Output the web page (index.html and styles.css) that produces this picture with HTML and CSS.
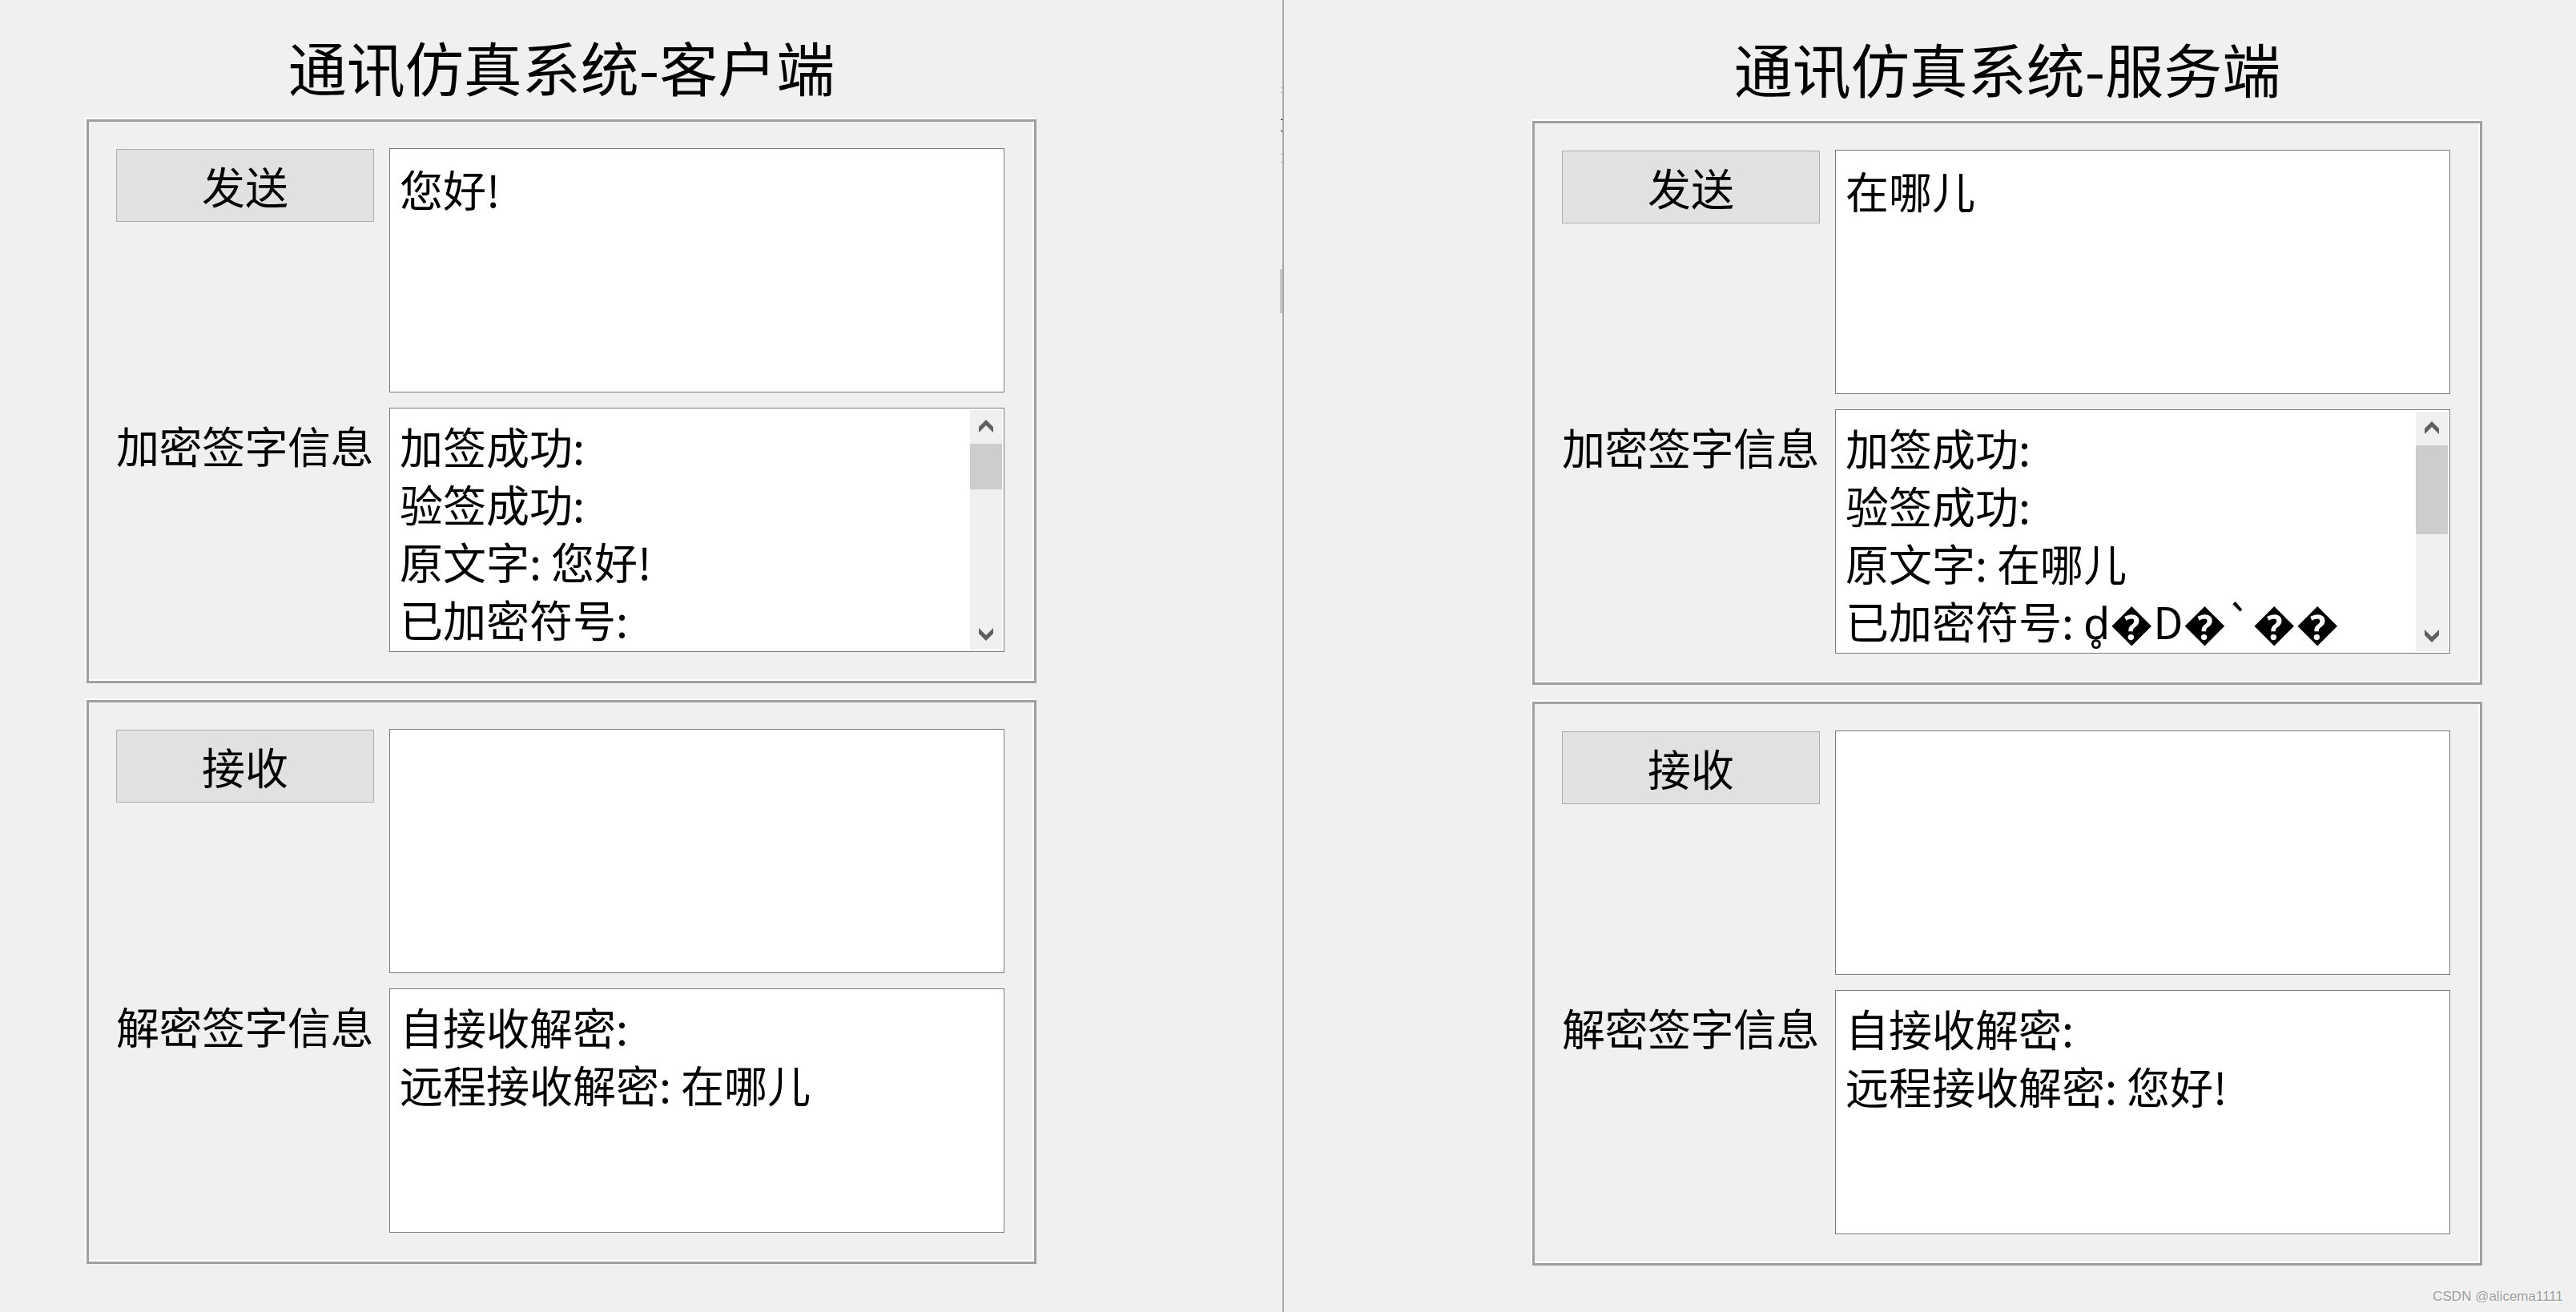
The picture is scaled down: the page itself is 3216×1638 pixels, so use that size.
FILE: index.html
```html
<!DOCTYPE html>
<html lang="zh-CN">
<head>
    <meta charset="UTF-8">
    <title>通讯仿真系统</title>
    <link rel="stylesheet" href="styles.css">
</head>
<body>
<div class="screen">

    <section class="pane pane-client">
        <h1 class="title">通讯仿真系统-客户端</h1>
        <div class="group">
            <div class="btn">发送</div>
            <div class="textbox top">您好!</div>
            <div class="label">加密签字信息</div>
            <div class="textbox scroll">
                <div class="lines">加签成功:<br>验签成功:<br>原文字: 您好!<br>已加密符号:</div>
                <div class="vbar">
                    <svg class="arrow up" width="18" height="16" viewBox="0 0 18 16"><polygon points="9,0 18,9 18,16 9,7 0,16 0,9"/></svg>
                    <div class="thumb"></div>
                    <svg class="arrow down" width="18" height="16" viewBox="0 0 18 16"><polygon points="0,0 9,9 18,0 18,7 9,16 0,7"/></svg>
                </div>
            </div>
        </div>
        <div class="group second">
            <div class="btn">接收</div>
            <div class="textbox top"></div>
            <div class="label">解密签字信息</div>
            <div class="textbox">自接收解密:<br>远程接收解密: 在哪儿</div>
        </div>
    </section>

    <div class="divider">
        <span class="tick t1"></span>
        <span class="tick t2"></span>
        <span class="tick g1"></span>
        <span class="tick g2"></span>
        <span class="tick g3"></span>
        <span class="tick g4"></span>
        <span class="seg"></span>
    </div>

    <section class="pane pane-server">
        <h1 class="title">通讯仿真系统-服务端</h1>
        <div class="group">
            <div class="btn">发送</div>
            <div class="textbox top">在哪儿</div>
            <div class="label">加密签字信息</div>
            <div class="textbox scroll">
                <div class="lines">加签成功:<br>验签成功:<br>原文字: 在哪儿<br>已加密符号: d&#805;&#65533;D&#65533;`&#65533;&#65533;</div>
                <div class="vbar">
                    <svg class="arrow up" width="18" height="16" viewBox="0 0 18 16"><polygon points="9,0 18,9 18,16 9,7 0,16 0,9"/></svg>
                    <div class="thumb big"></div>
                    <svg class="arrow down" width="18" height="16" viewBox="0 0 18 16"><polygon points="0,0 9,9 18,0 18,7 9,16 0,7"/></svg>
                </div>
            </div>
        </div>
        <div class="group second">
            <div class="btn">接收</div>
            <div class="textbox top"></div>
            <div class="label">解密签字信息</div>
            <div class="textbox">自接收解密:<br>远程接收解密: 您好!</div>
        </div>
    </section>

    <div class="watermark">CSDN @alicema1111</div>
</div>
</body>
</html>
```

FILE: styles.css
```css
html, body {
    margin: 0;
    padding: 0;
    background: #f0f0f0;
}
body {
    font-family: "Noto Sans CJK SC", "Noto Sans", sans-serif;
    color: #000;
}
.screen {
    position: relative;
    display: flex;
    width: 3216px;
    height: 1638px;
    overflow: hidden;
}

/* two app windows side by side */
.pane {
    display: flex;
    flex-direction: column;
    align-items: flex-start;
    box-sizing: border-box;
}
.pane-client {
    width: 1601px;
    padding: 37px 0 0 108px;
}
.pane-server {
    flex: 1;
    padding: 39px 0 0 310px;
}
.title {
    width: 1186px;
    margin: 0 0 22px 0;
    font-size: 73px;
    font-weight: normal;
    line-height: 90px;
    text-align: center;
    white-space: nowrap;
}

/* group box with etched edge */
.group {
    box-sizing: border-box;
    width: 1186px;
    border: 3px solid #a0a0a0;
    box-shadow: -2px -2px 0 #fff, inset -2px -2px 0 #fff;
    padding: 33px 37px 36px 34px;
    display: grid;
    grid-template-columns: 322px 768px;
    column-gap: 19px;
    row-gap: 19px;
}
.group.second {
    margin-top: 21px;
}

.btn {
    box-sizing: border-box;
    height: 91px;
    margin-top: 1px;
    background: #e1e1e1;
    border: 1px solid #adadad;
    display: flex;
    align-items: center;
    justify-content: center;
    font-size: 54px;
    line-height: 1;
    align-self: start;
}
.label {
    font-size: 54px;
    line-height: 72px;
    padding-top: 11px;
    white-space: nowrap;
    letter-spacing: -0.5px;
}
.textbox {
    position: relative;
    box-sizing: border-box;
    height: 305px;
    background: #fff;
    border: 1px solid #7a7a7a;
    padding: 11px 12px;
    font-size: 54px;
    line-height: 72px;
    white-space: nowrap;
    overflow: hidden;
}
.textbox.top {
    padding-top: 14px;
}

/* classic scroll bar */
.vbar {
    position: absolute;
    top: 2px;
    right: 2px;
    bottom: 2px;
    width: 40px;
    background: #f0f0f0;
}
.arrow {
    position: absolute;
    left: 11px;
    fill: #606060;
}
.arrow.up {
    top: 12px;
}
.arrow.down {
    bottom: 11px;
}
.thumb {
    position: absolute;
    top: 42px;
    left: 0;
    width: 40px;
    height: 57px;
    background: #cdcdcd;
}
.thumb.big {
    height: 111px;
}

/* edge of the window behind */
.divider {
    position: relative;
    width: 2px;
    background: #a7a7a7;
}
.tick {
    position: absolute;
    left: -2px;
    width: 2px;
    height: 1px;
}
.t1 { top: 149px; background: #000; }
.t2 { top: 163px; background: #000; }
.g1 { top: 109px; background: #b0b0b0; }
.g2 { top: 115px; background: #b0b0b0; }
.g3 { top: 192px; background: #b0b0b0; }
.g4 { top: 202px; background: #b0b0b0; }
.seg {
    position: absolute;
    left: -3px;
    top: 336px;
    width: 3px;
    height: 55px;
    background: #c8c8c8;
}

.watermark {
    position: absolute;
    right: 16px;
    bottom: 9px;
    font-family: "Liberation Sans", Arial, sans-serif;
    font-size: 17px;
    color: #9d9d9d;
    text-shadow: 1px 1px 0 #fff;
}
```
